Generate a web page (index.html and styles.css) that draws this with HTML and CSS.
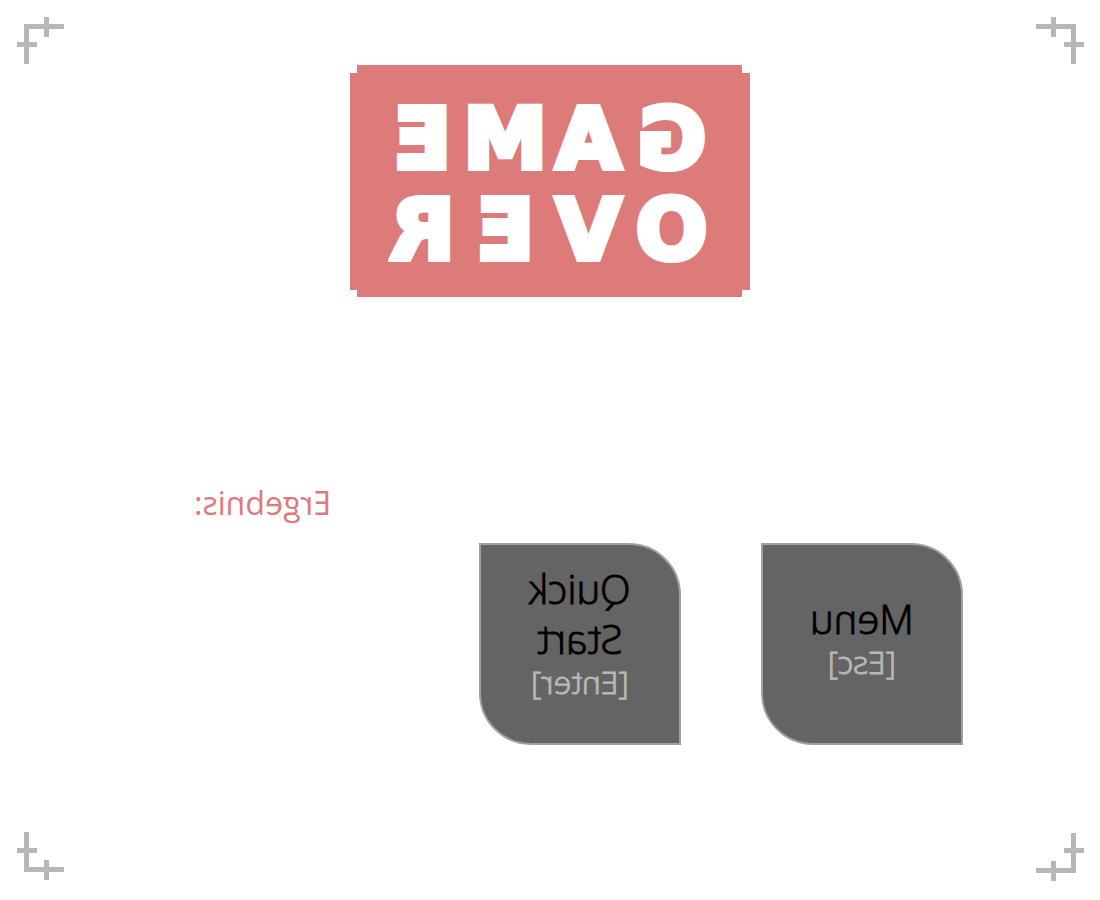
FILE: index.html
```html
<!DOCTYPE html>
<html lang="de">
<head>
<meta charset="utf-8">
<meta name="viewport" content="width=device-width, initial-scale=1">
<title>Game Over</title>
<link rel="stylesheet" href="styles.css">
</head>
<body>
<div class="screen">
  <div class="corners">
    <svg class="corner" viewBox="0 0 48 48" aria-hidden="true"><path d="M7 7H47V12H12V47H7zM27 0h5v20h-5zM0 25h20v5H0z"/></svg>
    <svg class="corner" viewBox="0 0 48 48" aria-hidden="true"><path d="M0 7H40V47H35V12H0zM15 0h5v20h-5zM28 25h20v5H28z"/></svg>
  </div>
  <main class="content">
    <h1 class="sign">
      <span class="word"><span>G</span><span>A</span><span>M</span><span>E</span></span>
      <span class="word"><span>O</span><span>V</span><span>E</span><span>R</span></span>
    </h1>
    <div class="results">
      <p class="score">Ergebnis:</p>
      <div class="actions">
        <button class="action" type="button"><span class="label"><span class="name">Quick<br>Start</span><span class="key">[Enter]</span></span></button>
        <button class="action" type="button"><span class="label"><span class="name">Menu</span><span class="key">[Esc]</span></span></button>
      </div>
    </div>
  </main>
  <div class="corners">
    <svg class="corner" viewBox="0 0 48 48" aria-hidden="true"><path d="M7 0H12V35H47V40H7zM0 16h20v5H0zM27 28h5v20h-5z"/></svg>
    <svg class="corner corner-low" viewBox="0 0 48 48" aria-hidden="true"><path d="M35 1H40V41H0V36H35zM28 16h20v5H28zM15 29h5v20h-5z"/></svg>
  </div>
</div>
</body>
</html>
```
FILE: styles.css
```css
* { box-sizing: border-box; }

body {
  margin: 0;
  background: #fff;
  font-family: "Open Sans", sans-serif;
}

.screen {
  display: flex;
  flex-direction: column;
  min-height: 100vh;
  padding: 17px 16px 20px 17px;
}

.corners {
  display: flex;
  justify-content: space-between;
}

.corner {
  display: block;
  width: 48px;
  height: 48px;
  fill: #b7b7b7;
  shape-rendering: crispEdges;
}

.corner-low {
  overflow: visible;
}

.content {
  flex: 1;
  display: flex;
  flex-direction: column;
  align-items: center;
  padding-right: 1px;
}

.sign {
  display: flex;
  flex-direction: column;
  align-items: center;
  justify-content: center;
  width: 400px;
  max-width: 100%;
  height: 232px;
  margin: 0;
  padding: 8px 7px 0 0;
  background: #dd7a7a;
  color: #fff;
  font-family: "DejaVu Sans", sans-serif;
  font-size: 84px;
  font-weight: 700;
  line-height: 91px;
  text-align: center;
  -webkit-text-stroke: 6px #fff;
  clip-path: polygon(7px 0, calc(100% - 8px) 0, calc(100% - 8px) 8px, 100% 8px, 100% calc(100% - 7px), calc(100% - 8px) calc(100% - 7px), calc(100% - 8px) 100%, 7px 100%, 7px calc(100% - 7px), 0 calc(100% - 7px), 0 8px, 7px 8px);
}

.word {
  display: grid;
  grid-template-columns: repeat(4, 83px);
}

.word,
.score,
.label {
  transform: scaleX(-1);
}

.results {
  display: flex;
  align-self: stretch;
  justify-content: flex-end;
  gap: 148px;
  margin-top: 182px;
  padding-right: 120px;
}

.score {
  margin: 0;
  padding-top: 2px;
  color: #dd7a7a;
  font-size: 32px;
  line-height: 44px;
}

.actions {
  display: flex;
  gap: 80px;
  padding-top: 64px;
}

.action {
  display: flex;
  align-items: center;
  justify-content: center;
  width: 202px;
  height: 202px;
  padding: 0 0 24px;
  border: 2px solid #a0a0a0;
  border-radius: 0 52px;
  background: #646464;
  color: #000;
  font-family: "Open Sans", sans-serif;
  font-weight: 300;
  -webkit-text-stroke: 1px currentColor;
  cursor: pointer;
}

.label {
  display: flex;
  flex-direction: column;
  justify-content: flex-end;
  min-height: 96px;
}

.name {
  font-size: 40px;
  line-height: 50px;
}

.key {
  color: #b7b7b7;
  -webkit-text-stroke-color: #b7b7b7;
  font-size: 32px;
  line-height: 36px;
}
```
